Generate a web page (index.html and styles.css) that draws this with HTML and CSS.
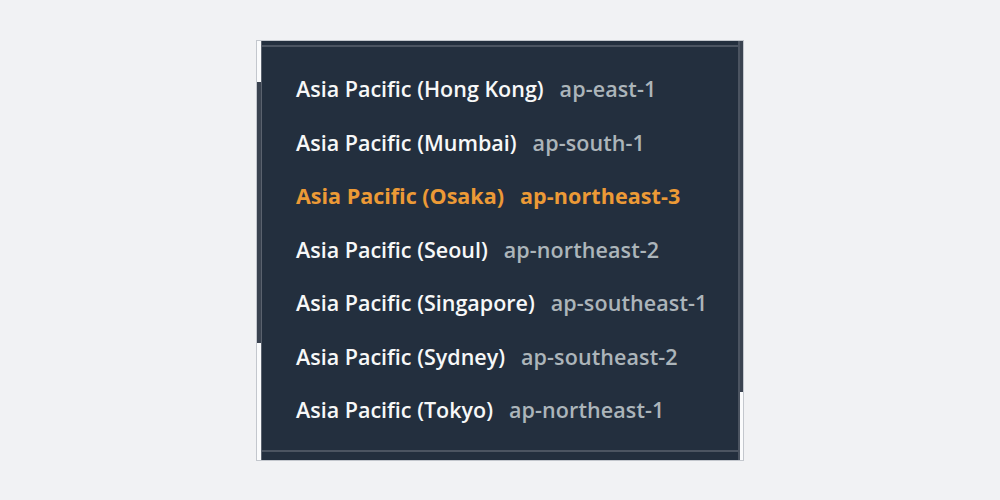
FILE: index.html
```html
<!DOCTYPE html>
<html lang="en">
<head>
    <meta charset="UTF-8">
    <meta name="viewport" content="width=device-width, initial-scale=1.0">
    <title>Regions</title>
    <link rel="stylesheet" href="styles.css">
</head>
<body>
    <div class="panel">
        <div class="rail rail-left">
            <div class="thumb thumb-top"></div>
            <div class="track"></div>
            <div class="thumb thumb-bottom"></div>
        </div>
        <div class="main">
            <ul class="regions">
                <li class="region"><span class="name">Asia Pacific (Hong Kong)</span><span class="code">ap-east-1</span></li>
                <li class="region"><span class="name">Asia Pacific (Mumbai)</span><span class="code">ap-south-1</span></li>
                <li class="region active"><span class="name">Asia Pacific (Osaka)</span><span class="code">ap-northeast-3</span></li>
                <li class="region"><span class="name">Asia Pacific (Seoul)</span><span class="code">ap-northeast-2</span></li>
                <li class="region"><span class="name">Asia Pacific (Singapore)</span><span class="code">ap-southeast-1</span></li>
                <li class="region"><span class="name">Asia Pacific (Sydney)</span><span class="code">ap-southeast-2</span></li>
                <li class="region"><span class="name">Asia Pacific (Tokyo)</span><span class="code">ap-northeast-1</span></li>
            </ul>
        </div>
        <div class="rail rail-right">
            <div class="track"></div>
            <div class="thumb thumb-end"></div>
        </div>
    </div>
</body>
</html>
```

FILE: styles.css
```css
body {
    margin: 0;
    height: 500px;
    background: #f1f2f4;
    display: flex;
    align-items: center;
    justify-content: center;
    font-family: "Open Sans", "Noto Sans", sans-serif;
}
.panel {
    width: 486px;
    height: 419px;
    border: 1px solid #c3c7cd;
    background: #232f3e;
    display: flex;
}
.rail {
    display: flex;
    flex-direction: column;
}
.rail-left {
    width: 4px;
    border-right: 1px solid #5a626e;
}
.rail-right {
    width: 3px;
    border-left: 2px solid #4b5461;
}
.track {
    flex: 1;
    background: #3a4350;
}
.thumb {
    background: #fafbfc;
}
.thumb-top {
    height: 41px;
}
.thumb-bottom {
    height: 117px;
}
.thumb-end {
    height: 68px;
}
.main {
    flex: 1;
    padding: 4px 0 8px;
    display: flex;
}
.regions {
    flex: 1;
    list-style: none;
    margin: 0;
    padding: 15.5px 0 0 34px;
    border-top: 2px solid #4b5461;
    border-bottom: 2px solid #4b5461;
}
.region {
    height: 53.5px;
    display: flex;
    align-items: center;
    gap: 16px;
    font-size: 21.5px;
    font-weight: 600;
    color: #f7f8f8;
}
.code {
    color: #acb5ba;
    letter-spacing: 0.1px;
}
.active .name,
.active .code {
    color: #ec9a36;
    font-weight: 700;
}
```
